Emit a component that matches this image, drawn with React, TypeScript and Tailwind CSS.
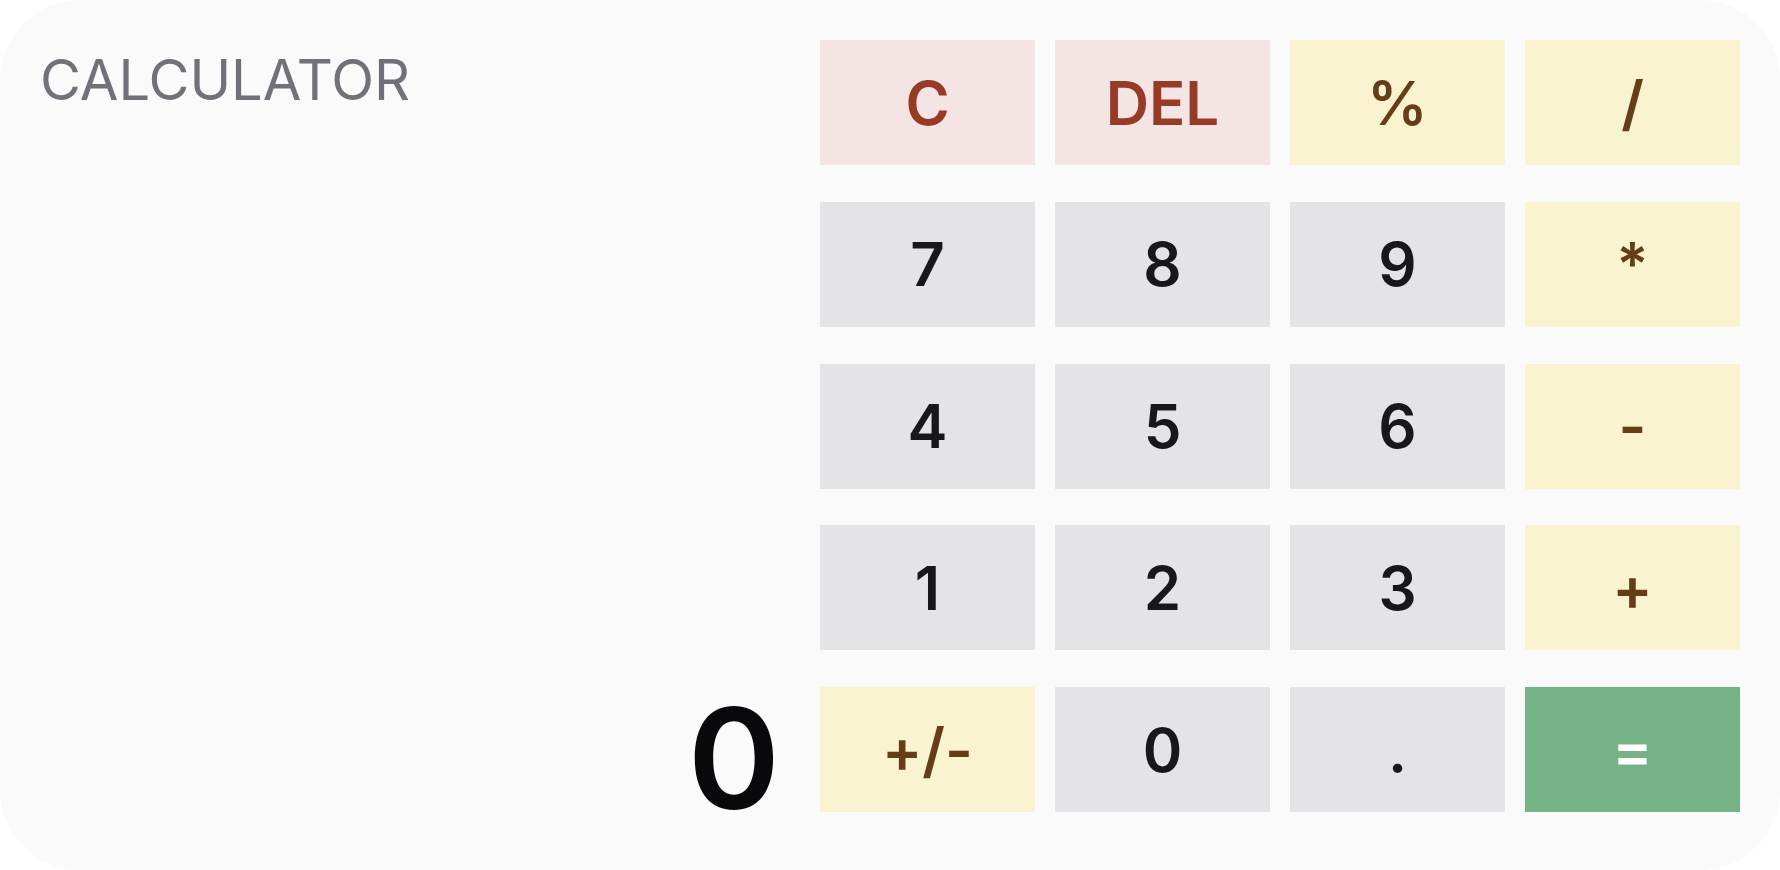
const keys: { label: string; kind: "clear" | "op" | "num" | "eq" }[] = [
  { label: "C", kind: "clear" },
  { label: "DEL", kind: "clear" },
  { label: "%", kind: "op" },
  { label: "/", kind: "op" },
  { label: "7", kind: "num" },
  { label: "8", kind: "num" },
  { label: "9", kind: "num" },
  { label: "*", kind: "op" },
  { label: "4", kind: "num" },
  { label: "5", kind: "num" },
  { label: "6", kind: "num" },
  { label: "-", kind: "op" },
  { label: "1", kind: "num" },
  { label: "2", kind: "num" },
  { label: "3", kind: "num" },
  { label: "+", kind: "op" },
  { label: "+/-", kind: "op" },
  { label: "0", kind: "num" },
  { label: ".", kind: "num" },
  { label: "=", kind: "eq" },
];

const kindStyles = {
  clear: "bg-[#f4e4e4] text-[#973a26]",
  op: "bg-[#f9f3d0] text-[#673c19]",
  num: "bg-[#e4e4e7] text-[#18181b]",
  eq: "bg-[#75b386] text-white",
};

export default function App() {
  return (
    <main className="min-h-screen bg-white font-['Inter',sans-serif]">
      <div className="h-[870px] w-full rounded-[80px] bg-[#fafafa] flex gap-10 pl-10 pr-10 pt-10 pb-[58px]">
        <div className="flex-1 flex flex-col justify-between">
          <h1 className="mt-[12px] text-[56px] leading-none text-[#71717a]">
            CALCULATOR
          </h1>
          <div className="-mb-[16px] text-right text-[140px] font-semibold leading-none text-[#09090b]">
            0
          </div>
        </div>
        <div className="grid grid-cols-[repeat(4,215px)] grid-rows-[repeat(5,125px)] gap-x-5 gap-y-[36.75px]">
          {keys.map((k) => (
            <button
              key={k.label}
              className={`flex items-center justify-center text-6xl font-semibold leading-none ${kindStyles[k.kind]}`}
            >
              {k.label}
            </button>
          ))}
        </div>
      </div>
    </main>
  );
}
